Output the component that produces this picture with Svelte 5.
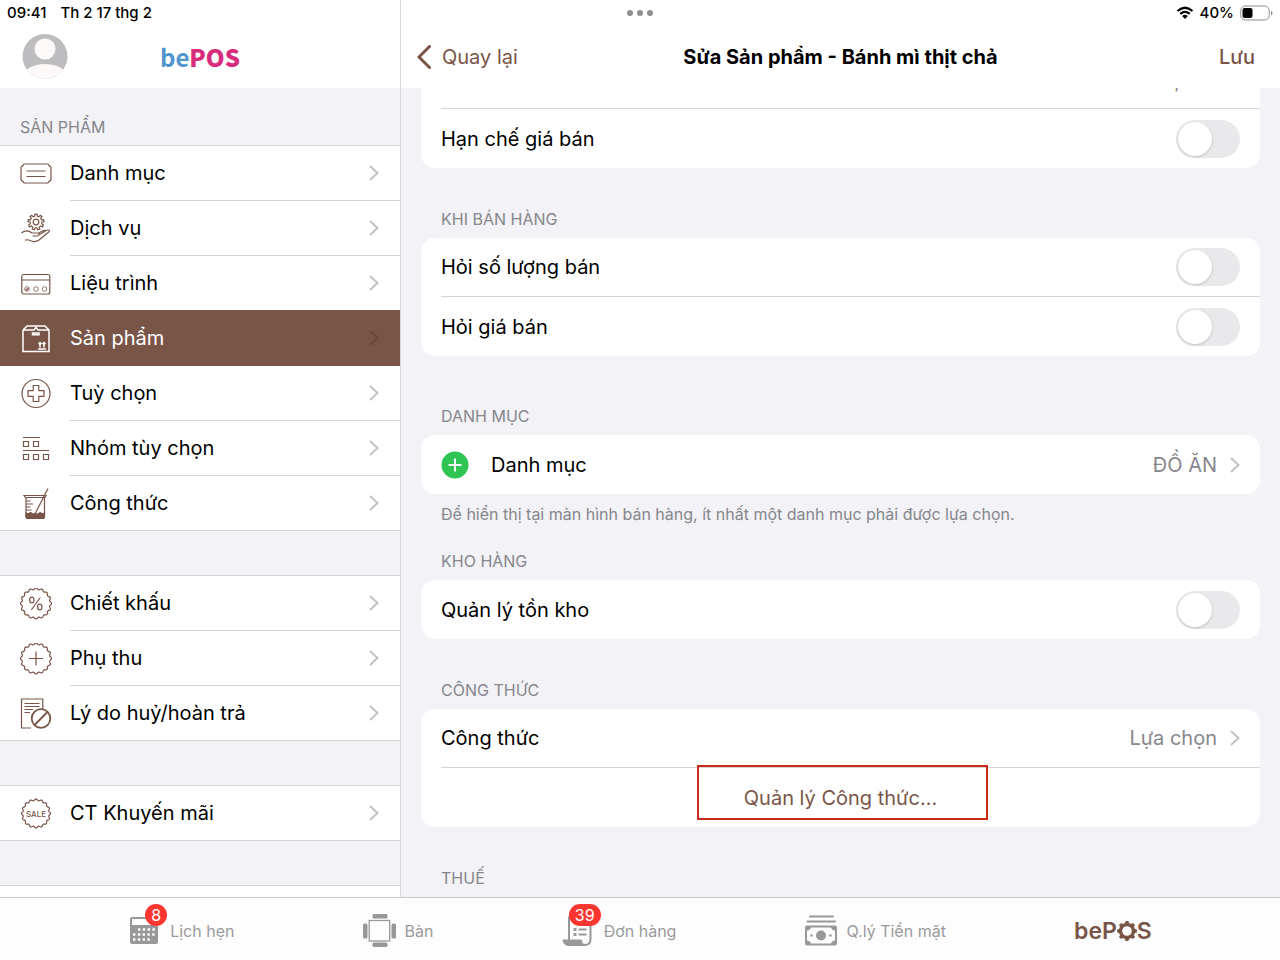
<script lang="ts">
	type MenuItem = { icon: string; label: string };
	type Toggle = { id: string; label: string };

	const menu: MenuItem[][] = [
		[
			{ icon: 'ticket', label: 'Danh mục' },
			{ icon: 'service', label: 'Dịch vụ' },
			{ icon: 'course', label: 'Liệu trình' },
			{ icon: 'box', label: 'Sản phẩm' },
			{ icon: 'option', label: 'Tuỳ chọn' },
			{ icon: 'group', label: 'Nhóm tùy chọn' },
			{ icon: 'beaker', label: 'Công thức' }
		],
		[
			{ icon: 'percent', label: 'Chiết khấu' },
			{ icon: 'surcharge', label: 'Phụ thu' },
			{ icon: 'void', label: 'Lý do huỷ/hoàn trả' }
		],
		[{ icon: 'sale', label: 'CT Khuyến mãi' }]
	];

	const saleToggles: Toggle[] = [
		{ id: 'ask-quantity', label: 'Hỏi số lượng bán' },
		{ id: 'ask-price', label: 'Hỏi giá bán' }
	];

	const tabs = [
		{ icon: 'calendar', label: 'Lịch hẹn', badge: 8 },
		{ icon: 'table', label: 'Bàn', badge: 0 },
		{ icon: 'orders', label: 'Đơn hàng', badge: 39 },
		{ icon: 'cash', label: 'Q.lý Tiền mặt', badge: 0 }
	];

	let selected = $state('Sản phẩm');
	let switches: Record<string, boolean> = $state({
		'limit-price': false,
		'ask-quantity': false,
		'ask-price': false,
		stock: false
	});

	// wavy seal outline
	function seal(cx: number, cy: number, r: number, depth: number, lobes: number) {
		let d = '';
		for (let i = 0; i <= 180; i++) {
			const a = (i / 180) * Math.PI * 2;
			const rr = r - depth + depth * Math.cos(a * lobes);
			d += `${i ? 'L' : 'M'}${(cx + rr * Math.sin(a)).toFixed(2)} ${(cy - rr * Math.cos(a)).toFixed(2)}`;
		}
		return d + 'Z';
	}

	function gear(cx: number, cy: number, outer: number, inner: number, teeth: number) {
		const step = (Math.PI * 2) / teeth;
		const pts: string[] = [];
		for (let i = 0; i < teeth; i++) {
			for (const [off, r] of [[-0.3, inner], [-0.19, outer], [0.19, outer], [0.3, inner]]) {
				const a = (i + off) * step;
				pts.push(`${(cx + r * Math.sin(a)).toFixed(2)} ${(cy - r * Math.cos(a)).toFixed(2)}`);
			}
		}
		return 'M' + pts.join('L') + 'Z';
	}

	const sealPath = seal(16, 15.5, 15.5, 0.8, 16);
</script>

{#snippet chevron()}
	<svg class="chevron" viewBox="0 0 10 16" aria-hidden="true"><path d="M1 1l7.500 7L1 15" /></svg>
{/snippet}

{#snippet toggle(id: string, label: string)}
	<div class="row">
		<label for={id}>{label}</label>
		<input {id} class="switch" type="checkbox" role="switch" bind:checked={switches[id]} />
	</div>
{/snippet}

{#snippet menuIcon(name: string)}
	<svg class="menu-icon" viewBox="0 0 32 32" aria-hidden="true">
		{#if name === 'ticket'}
			<path d="M4 6H28L29 7.500L31 9V22L29 23.500L28 25H4L3 23.500L1 22V9L3 7.500Z" />
			<path d="M6.500 13H25.500M6.500 18.500H25.500" />
		{:else if name === 'service'}
			<path d={gear(16, 9, 8, 6, 9)} />
			<circle cx="16" cy="9" r="2.800" />
			<path d="M1.500 20C5 17 9 17.500 12 20H17.500C20 20 19.500 23 17 23H12.500M19.500 21.500L26.500 17.300C28.500 16.500 30.500 17.500 28.500 19.300L19 27C16 29 13 29 10 27.500C8 26.500 6.500 26.500 5 27.300M18 20.500L23 17.700C24.500 17 25.500 17.500 25.500 18" />
		{:else if name === 'course'}
			<rect x="1.800" y="6.500" width="28" height="19.500" rx="2" />
			<path d="M2 12H30M5.700 21l1 1 2-2.200" />
			<circle cx="7" cy="21" r="2.300" class="faint" />
			<circle cx="16" cy="21" r="2.300" class="faint" />
			<circle cx="24.500" cy="21" r="2.300" class="faint" />
		{:else if name === 'box'}
			<path d="M3 7V28.500H29V7L25 3H7L3 7M3 7H14L16 4.500L18 7H29" />
			<path d="M12.500 10h6.500v1.800h-6.500zM18 26H26M20 24.500V19.500M24 24.500V19.500M18.500 21L20 19.500L21.500 21M22.500 21L24 19.500L25.500 21" />
		{:else if name === 'option'}
			<circle cx="16" cy="15.500" r="14" />
			<path d="M13.200 7.500H18.800V12.700H24V18.300H18.800V23.500H13.200V18.300H8V12.700H13.200Z" />
		{:else if name === 'group'}
			<path d="M3 4.500H20M3 17.500H29" />
			<path d="M3.500 8.500h5v5h-5zM13.500 8.500h5v5h-5zM3.500 21.500h5v5h-5zM13.500 21.500h5v5h-5zM23.500 21.500h5v5h-5z" />
		{:else if name === 'beaker'}
			<path d="M28 0.500L15 26M4 7.500H26L25 9.500H5.500ZM6 9.500V28Q6 30.500 8 30.500H22.500Q24.500 30.500 24.500 28V9.500M6 13H10.500M6 16H13M6 19H10.500M6 22H11.500" />
			<path class="solid" d="M6 25Q8.500 26.500 10.500 24.500Q13 27 15 25.500Q18 27 20 24.500Q22 26.500 24.500 25V28Q24.500 30.500 22.500 30.500H8Q6 30.500 6 28Z" />
		{:else if name === 'percent'}
			<path d={sealPath} />
			<ellipse cx="11.800" cy="12" rx="2.200" ry="2.900" />
			<ellipse cx="19.800" cy="19" rx="2.200" ry="2.900" />
			<path d="M20.300 9.500L11.300 22" />
		{:else if name === 'surcharge'}
			<path d={sealPath} />
			<path d="M9 15.500H23M16 8.500V22.500" />
		{:else if name === 'void'}
			<path d="M11 30H1.500V1H22.800V11M4.500 5.500H19.500M4.500 8.500H19.500M4.500 11.500H13M4.500 14.500H10" />
			<circle class="thick" cx="21" cy="20.500" r="9.300" />
			<path class="thick" d="M27.500 14L14.500 27" />
		{:else if name === 'sale'}
			<path d={seal(16, 15.5, 14.5, 0.8, 16)} />
			<text x="16" y="18.500">SALE</text>
		{/if}
	</svg>
{/snippet}

{#snippet tabIcon(name: string)}
	<svg class="tab-icon" viewBox="0 0 34 34" aria-hidden="true">
		{#if name === 'calendar'}
			<path fill-rule="evenodd" d="M4 3H28Q30 3 30 5V28Q30 30 28 30H4Q2 30 2 28V5Q2 3 4 3ZM4 5V11H28V5Z" />
			<path class="holes" d="M10 15.500h18M5 20.500h22M5 25.500h18" />
		{:else if name === 'table'}
			<rect x="9.500" y="0" width="15" height="4.500" rx="1.500" />
			<rect x="9.500" y="28.500" width="15" height="4.500" rx="1.500" />
			<rect x="0" y="9.500" width="4.500" height="15" rx="1.500" />
			<rect x="28.500" y="9.500" width="4.500" height="15" rx="1.500" />
			<rect class="line" x="6.200" y="6.500" width="20.500" height="20.500" />
		{:else if name === 'orders'}
			<path class="line thick" d="M7 26V4Q7 2 9 2H28.500V25Q28.500 31 23 31Q19 31 19 26.500" />
			<path d="M0.500 25.500H18Q18 30 22.500 32H7Q1 32 0.500 25.500Z" />
			<path d="M11.500 14h3v3h-3zM16.500 14.500h8v2h-8zM11.500 19h3v3h-3zM16.500 19.500h8v2h-8z" />
		{:else if name === 'cash'}
			<path class="line thick" d="M5 2.500H28M2.500 7.500H30" />
			<path fill-rule="evenodd" d="M2 11.500H30Q32 11.500 32 13.500V29.500Q32 31.500 30 31.500H2Q0 31.500 0 29.500V13.500Q0 11.500 2 11.500ZM6 13.500Q5 16.500 2 16.500V26.500Q5 26.500 6 29.500H26Q27 26.500 30 26.500V16.500Q27 16.500 26 13.500Z" />
			<circle cx="16" cy="21.500" r="5" />
			<circle cx="6.500" cy="21.500" r="1.200" />
			<circle cx="25.500" cy="21.500" r="1.200" />
		{/if}
	</svg>
{/snippet}

<div class="screen">
	<div class="status">
		<div class="clock"><span>09:41</span><span>Th 2 17 thg 2</span></div>
		<div class="dots"><i></i><i></i><i></i></div>
		<div class="power">
			<svg class="wifi" viewBox="0 0 18 13" aria-hidden="true">
				<path d="M1.500 5Q9 -1.500 16.500 5M4.200 7.800Q9 3.800 13.800 7.800" />
				<path class="dot" d="M6.200 10Q9 7.700 11.800 10L9 13Z" />
			</svg>
			<span>40%</span>
			<svg class="battery" viewBox="0 0 33 16" aria-hidden="true">
				<rect x="0.700" y="1" width="28.500" height="14" rx="4.500" />
				<rect class="level" x="2.500" y="3" width="10" height="10" rx="2" />
				<path class="level tip" d="M31 5.500Q32.500 6.500 32.500 8T31 10.500Z" />
			</svg>
		</div>
	</div>

	<aside>
		<header class="bar brand">
			<button class="avatar" type="button" aria-label="Tài khoản">
				<svg viewBox="0 0 46 46" aria-hidden="true">
					<clipPath id="avatar-clip"><circle cx="23" cy="22.500" r="22.500" /></clipPath>
					<g clip-path="url(#avatar-clip)">
						<rect width="46" height="46" fill="#bdbdbf" />
						<circle cx="23" cy="15" r="10.500" fill="#fffafa" />
						<ellipse cx="23" cy="43" rx="22" ry="13" fill="#fff8f8" />
					</g>
				</svg>
			</button>
			<span class="logo">be<b>POS</b></span>
		</header>
		<nav aria-label="Sản phẩm">
			<h2>SẢN PHẨM</h2>
			{#each menu as group}
				<ul>
					{#each group as item}
						<li class:selected={item.label === selected}>
							<button type="button" onclick={() => (selected = item.label)}>
								{@render menuIcon(item.icon)}
								<span class="menu-label">{item.label}{@render chevron()}</span>
							</button>
						</li>
					{/each}
				</ul>
			{/each}
			<ul><li></li></ul>
		</nav>
	</aside>

	<main>
		<header class="bar title-bar">
			<button class="back" type="button">
				<svg viewBox="0 0 14 24" aria-hidden="true"><path d="M12.500 1.500L2 12L12.500 22.500" /></svg>
				Quay lại
			</button>
			<h1>Sửa Sản phẩm - Bánh mì thịt chả</h1>
			<button class="save" type="button">Lưu</button>
		</header>

		<div class="content">
			<section class="first">
				<div class="card">
					<div class="row cut"><span>,</span></div>
					{@render toggle('limit-price', 'Hạn chế giá bán')}
				</div>
			</section>

			<section>
				<h2>KHI BÁN HÀNG</h2>
				<div class="card">
					{#each saleToggles as item}
						{@render toggle(item.id, item.label)}
					{/each}
				</div>
			</section>

			<section class="wide">
				<h2>DANH MỤC</h2>
				<div class="card">
					<button class="row" type="button">
						<svg class="add" viewBox="0 0 28 28" aria-hidden="true">
							<circle cx="14" cy="14" r="13.500" />
							<path d="M7.500 14H20.500M14 7.500V20.500" />
						</svg>
						<span class="name">Danh mục</span>
						<span class="value">ĐỒ ĂN</span>
						{@render chevron()}
					</button>
				</div>
				<p>Để hiển thị tại màn hình bán hàng, ít nhất một danh mục phải được lựa chọn.</p>
			</section>

			<section class="tight">
				<h2>KHO HÀNG</h2>
				<div class="card">
					{@render toggle('stock', 'Quản lý tồn kho')}
				</div>
			</section>

			<section>
				<h2>CÔNG THỨC</h2>
				<div class="card">
					<button class="row" type="button">
						<span class="name">Công thức</span>
						<span class="value">Lựa chọn</span>
						{@render chevron()}
					</button>
					<div class="manage">
						<button class="row link" type="button">Quản lý Công thức...</button>
						<span class="marker"></span>
					</div>
				</div>
			</section>

			<section>
				<h2>THUẾ</h2>
			</section>
		</div>
	</main>

	<nav class="tabs" aria-label="Chính">
		{#each tabs as tab}
			<button type="button">
				<span class="tab-figure">
					{@render tabIcon(tab.icon)}
					{#if tab.badge}<span class="badge">{tab.badge}</span>{/if}
				</span>
				{tab.label}
			</button>
		{/each}
		<button type="button" class="home">
			beP<svg viewBox="0 0 20 20" role="img" aria-label="O">
				<path fill-rule="evenodd" d={gear(10, 10, 10, 8.2, 8) + 'M10 5.2a4.800 4.800 0 1 0 0 9.600a4.800 4.800 0 1 0 0 -9.600Z'} />
			</svg>S
		</button>
	</nav>
</div>

<style>
	:global(body) {
		margin: 0;
	}

	.screen {
		--brown: #795548;
		--line: #d4d4d7;
		--grey: #86868b;
		position: relative;
		display: grid;
		grid-template-columns: 5fr 11fr;
		grid-template-rows: minmax(0, 1fr) auto;
		height: 100vh;
		overflow: hidden;
		background: #f2f2f7;
		color: #000;
		font-family: Inter, 'Noto Sans', sans-serif;
		font-size: 20px;
		line-height: 24px;
	}

	button {
		margin: 0;
		padding: 0;
		border: 0;
		background: none;
		color: inherit;
		font: inherit;
		text-align: left;
		cursor: pointer;
	}

	svg {
		display: block;
		flex: none;
		fill: none;
	}

	h2 {
		margin: 0;
		color: var(--grey);
		font-size: 16px;
		font-weight: 400;
	}

	.status {
		position: absolute;
		z-index: 1;
		top: 0;
		left: 0;
		right: 0;
		display: grid;
		grid-template-columns: 1fr auto 1fr;
		align-items: center;
		height: 25px;
		padding: 0 7px;
		font-size: 15px;
		font-weight: 500;
	}

	.clock,
	.dots,
	.power {
		display: flex;
		align-items: center;
	}

	.clock {
		gap: 14px;
	}

	.dots {
		gap: 4px;
	}

	.dots i {
		width: 6px;
		height: 6px;
		border-radius: 50%;
		background: #8e8e90;
	}

	.power {
		gap: 6px;
		justify-content: flex-end;
	}

	.wifi {
		width: 18px;
		height: 13px;
		stroke: #000;
		stroke-width: 2.2;
	}

	.wifi .dot {
		fill: #000;
		stroke: none;
	}

	.battery {
		width: 33px;
		height: 16px;
		stroke: #8c8c8c;
	}

	.battery .level {
		fill: #000;
		stroke: none;
	}

	.battery .tip {
		fill: #8c8c8c;
	}

	aside,
	main {
		display: flex;
		flex-direction: column;
		min-width: 0;
		overflow: hidden;
	}

	main {
		border-left: 1px solid #d8d8dc;
	}

	.bar {
		display: grid;
		flex: none;
		grid-template-columns: 1fr auto 1fr;
		align-items: center;
		box-sizing: border-box;
		height: 88px;
		padding-top: 25px;
		background: #fff;
	}

	.avatar {
		width: 46px;
		margin-left: 22px;
	}

	.logo {
		color: #5195cf;
		font-family: 'Noto Sans CJK SC', sans-serif;
		font-size: 24px;
		font-weight: 700;
	}

	.logo b {
		color: #d92b7c;
	}

	aside h2 {
		padding: 27px 20px 6px;
	}

	ul {
		margin: 0 0 44px;
		padding: 0;
		border-top: 1px solid var(--line);
		background: #fff;
		list-style: none;
	}

	li {
		height: 55px;
	}

	li button {
		display: flex;
		align-items: center;
		gap: 18px;
		width: 100%;
		height: 55px;
		padding-left: 20px;
	}

	.menu-icon {
		width: 32px;
		height: 32px;
		stroke: var(--brown);
		stroke-width: 1.2;
	}

	.menu-icon .faint {
		stroke-width: 0.8;
	}

	.menu-icon .thick {
		stroke-width: 1.8;
	}

	.menu-icon .solid {
		fill: var(--brown);
	}

	.menu-icon text {
		fill: var(--brown);
		stroke: none;
		font-size: 8px;
		font-weight: 500;
		text-anchor: middle;
	}

	.menu-label {
		display: flex;
		flex: 1;
		align-items: center;
		justify-content: space-between;
		box-sizing: border-box;
		height: 55px;
		padding-right: 21px;
		border-bottom: 1px solid var(--line);
	}

	li:last-child {
		box-shadow: inset 0 -1px var(--line);
	}

	.selected {
		background: var(--brown);
		color: #fff;
	}

	.selected .menu-icon {
		stroke: #fff;
		stroke-width: 1.5;
	}

	.selected .menu-label,
	li:has(+ .selected) .menu-label {
		border-color: var(--brown);
	}

	li:has(+ .selected) {
		box-shadow: inset 0 -1px var(--brown);
	}

	.chevron {
		width: 10px;
		height: 16px;
		stroke: #c2c2c5;
		stroke-width: 2;
	}

	.selected .chevron {
		stroke: #69473c;
	}

	.title-bar {
		padding-right: 16px;
		padding-left: 16px;
		color: var(--brown);
	}

	h1 {
		margin: 0;
		color: #000;
		font-size: 20px;
		font-weight: 700;
	}

	.back {
		display: flex;
		gap: 11px;
	}

	.back svg {
		width: 14px;
		height: 24px;
		stroke: var(--brown);
		stroke-width: 3;
		stroke-linecap: round;
	}

	.save {
		justify-self: end;
		margin-right: 9px;
		font-weight: 500;
	}

	.content {
		flex: 1;
		min-height: 0;
		padding: 0 20px;
		overflow: hidden;
	}

	section {
		padding-top: 39px;
	}

	.first {
		padding-top: 0;
	}

	.wide {
		padding-top: 48px;
	}

	.tight {
		padding-top: 23px;
	}

	section h2 {
		margin: 0 20px 7px;
	}

	.card {
		overflow: hidden;
		border-radius: 14px;
		background: #fff;
	}

	.first .card {
		border-radius: 0 0 14px 14px;
	}

	.row {
		display: flex;
		align-items: center;
		box-sizing: border-box;
		width: calc(100% - 20px);
		height: 59px;
		margin-left: 20px;
		padding-right: 20px;
		border-bottom: 1px solid var(--line);
	}

	.row:last-child,
	.manage .row {
		border-bottom: 0;
	}

	.row label,
	.row .name {
		flex: 1;
	}

	.cut {
		align-items: flex-end;
		justify-content: flex-end;
		height: 21px;
		padding: 0 80px 15px 0;
		overflow: hidden;
		color: var(--grey);
	}

	.switch {
		width: 64px;
		height: 38px;
		margin: 0;
		padding: 2px;
		border-radius: 19px;
		box-sizing: border-box;
		background: #e9e9eb;
		appearance: none;
		cursor: pointer;
	}

	.switch::before {
		display: block;
		width: 34px;
		height: 34px;
		border-radius: 50%;
		background: #fff;
		box-shadow: 0 1px 3px rgba(0, 0, 0, 0.18);
		content: '';
		transition: transform 0.2s;
	}

	.switch:checked {
		background: #34c759;
	}

	.switch:checked::before {
		transform: translateX(26px);
	}

	.add {
		width: 28px;
		height: 28px;
		margin-right: 22px;
		fill: #30c553;
		stroke: #fff;
		stroke-width: 2;
	}

	.add circle {
		stroke: none;
	}

	.value {
		margin-right: 13px;
		color: var(--grey);
	}

	p {
		margin: 8px 20px 0;
		color: var(--grey);
		font-size: 16px;
	}

	.manage {
		position: relative;
	}

	.card:has(.manage) {
		overflow: visible;
	}

	.link {
		justify-content: center;
		padding-right: 40px;
		padding-left: 20px;
		color: var(--brown);
	}

	.marker {
		position: absolute;
		top: -3px;
		right: 32.4%;
		bottom: 7px;
		left: 32.9%;
		border: 2px solid #cb2a1a;
		pointer-events: none;
	}

	.tabs {
		display: flex;
		grid-column: 1 / -1;
		align-items: center;
		justify-content: space-evenly;
		height: 62px;
		border-top: 1px solid #c8c8ca;
		background: #fdfdfd;
		color: #9a9a9c;
		font-size: 16px;
	}

	.tabs button {
		display: flex;
		align-items: center;
		gap: 8px;
		padding-top: 3px;
	}

	.tab-figure {
		position: relative;
	}

	.tab-icon {
		width: 34px;
		height: 34px;
		fill: #98989a;
	}

	.tab-icon .line {
		fill: none;
		stroke: #98989a;
		stroke-width: 1.3;
	}

	.tab-icon .thick {
		stroke-width: 2;
		stroke-linecap: round;
	}

	.tab-icon .holes {
		fill: none;
		stroke: #fff;
		stroke-width: 2.4;
		stroke-dasharray: 2.4 2.4;
	}

	.badge {
		position: absolute;
		top: -10px;
		right: -5px;
		box-sizing: border-box;
		min-width: 22px;
		height: 22px;
		padding: 0 6px;
		border-radius: 11px;
		background: #fb3630;
		color: #fff;
		line-height: 22px;
		text-align: center;
	}

	.tabs .home {
		gap: 0;
		color: var(--brown);
		font-size: 23px;
		font-weight: 600;
	}

	.home svg {
		width: 20px;
		height: 20px;
		fill: var(--brown);
	}
</style>
